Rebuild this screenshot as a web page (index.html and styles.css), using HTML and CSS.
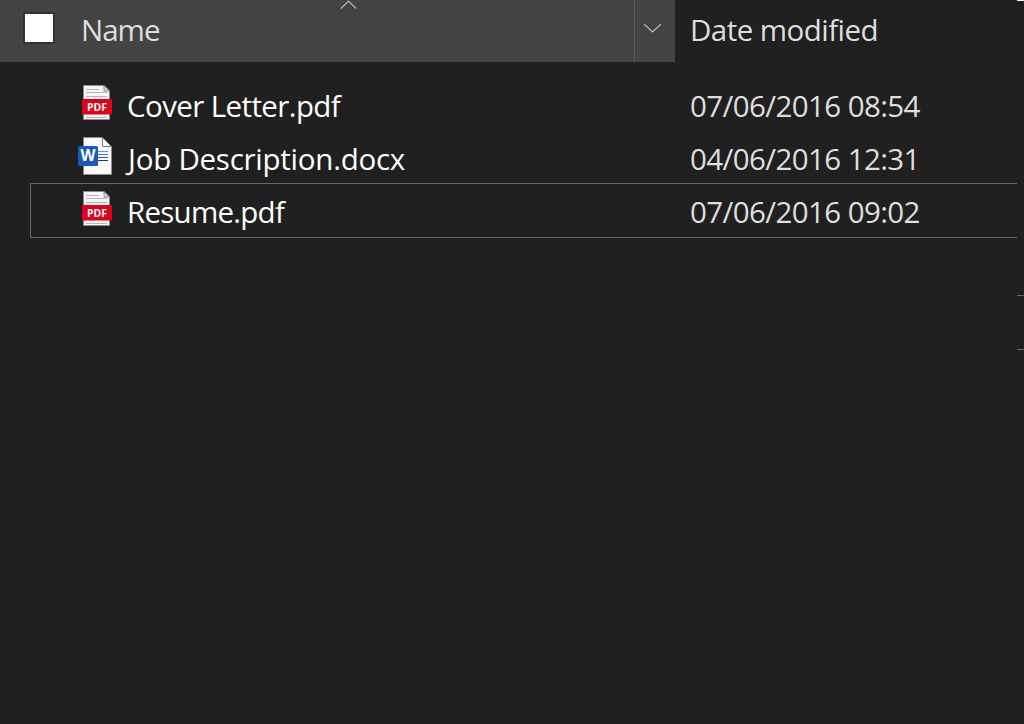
FILE: index.html
```html
<!DOCTYPE html>
<html lang="en">
<head>
<meta charset="utf-8">
<title>Files</title>
<link rel="stylesheet" href="styles.css">
</head>
<body>
<main class="explorer">
  <header class="columns">
    <div class="name-column">
      <span class="checkbox"></span>
      <span class="label name-label">Name</span>
      <svg class="sort" width="17" height="9"><path d="M1 8.500L8.500 1L16 8.500"/></svg>
    </div>
    <div class="filter"><svg width="19" height="10"><path d="M1 1L9.500 9L18 1"/></svg></div>
    <div class="label date-label">Date modified</div>
  </header>
  <section class="files">
    <div class="row">
      <svg class="icon" viewBox="0 0 36 40">
        <path d="M6.500 2.500H27L32.500 8V36.500H6.500Z" fill="#f5f5f5" stroke="#8b8b8b"/>
        <path d="M27 2.500V8H32.500Z" fill="#ddd" stroke="#777" stroke-width=".8"/>
        <path d="M9 6.500H22M9 9.500H30M9 13.500H30M9 34.500H30" stroke="#b5b5b5"/>
        <rect x="5" y="16" width="30" height="15.500" rx=".8" fill="#e2001a"/>
        <text class="pdf-label" x="10" y="27.500" textLength="20" lengthAdjust="spacingAndGlyphs">PDF</text>
      </svg>
      <span class="file cover">Cover Letter.pdf</span><time>07/06/2016 08:54</time>
    </div>
    <div class="row">
      <svg class="icon" viewBox="0 0 36 40">
        <path d="M6.500 1.500H25.500L34.500 10.500V38.500H6.500Z" fill="#fafafa" stroke="#8b8b8b"/>
        <path d="M25.500 1.500V10.500H34.500Z" fill="#fff" stroke="#777"/>
        <path d="M21 15.500H31" stroke="#41a5ee"/>
        <path d="M21 18.500H31" stroke="#2b7cd3"/>
        <path d="M21 21.500H31" stroke="#185abd"/>
        <path d="M21 24.500H31" stroke="#103f91"/>
        <rect x="1" y="10" width="20" height="20" rx="1.500" fill="#185abd"/>
        <text class="word-label" x="3.500" y="25" textLength="15" lengthAdjust="spacingAndGlyphs">W</text>
      </svg>
      <span class="file job">Job Description.docx</span><time>04/06/2016 12:31</time>
    </div>
    <div class="row focused">
      <svg class="icon" viewBox="0 0 36 40">
        <path d="M6.500 2.500H27L32.500 8V36.500H6.500Z" fill="#f5f5f5" stroke="#8b8b8b"/>
        <path d="M27 2.500V8H32.500Z" fill="#ddd" stroke="#777" stroke-width=".8"/>
        <path d="M9 6.500H22M9 9.500H30M9 13.500H30M9 34.500H30" stroke="#b5b5b5"/>
        <rect x="5" y="16" width="30" height="15.500" rx=".8" fill="#e2001a"/>
        <text class="pdf-label" x="10" y="27.500" textLength="20" lengthAdjust="spacingAndGlyphs">PDF</text>
      </svg>
      <span class="file resume">Resume.pdf</span><time>07/06/2016 09:02</time>
    </div>
  </section>
  <i class="corner"></i>
  <i class="edge"></i>
</main>
</body>
</html>
```
FILE: styles.css
```css
* { box-sizing: border-box; }
body { margin: 0; background: #202020; }
.explorer {
  position: relative;
  width: 1024px;
  height: 724px;
  overflow: hidden;
  background: #202020;
  color: #dedede;
  font: 29.5px/40px "Open Sans", "Noto Sans", sans-serif;
  white-space: nowrap;
}
.columns { display: flex; height: 62px; }
.name-column {
  position: relative;
  display: flex;
  width: 634px;
  padding: 10px 0 0 23px;
  background: #434343;
}
.checkbox { width: 32px; height: 32px; margin: 2px 26px 0 0; border: 2px solid #333; background: #fff; }
.sort { position: absolute; left: 340px; top: 0; }
.columns path { fill: none; stroke: #b8b8b8; stroke-width: 1.2; }
.filter { width: 41px; padding: 23px 0 0 8px; border-left: 1px solid #5c5c5c; background: #434343; }
.filter svg { display: block; }
.date-label { padding: 10px 0 0 15px; letter-spacing: -.55px; }
.name-label { letter-spacing: -1px; }
.files { padding: 16px 7px 0 30px; }
.row { display: flex; height: 53px; padding: 4px 0 0 1px; border: 1px solid transparent; }
.row.focused { height: 55px; padding-top: 5px; border-color: #666; border-right: 0; margin-top: -1px; }
.icon { flex: none; width: 36px; height: 40px; margin-left: 45px; }
.file { flex: none; width: 577px; padding: 3px 0 0 14px; color: #fff; }
time { padding-top: 3px; letter-spacing: -.6px; }
.cover { letter-spacing: -.6px; }
.job { padding-left: 15px; letter-spacing: -.25px; }
.resume { letter-spacing: -.75px; }
.pdf-label { fill: #fff; font: bold 11px "Open Sans", sans-serif; }
.word-label { fill: #fff; font: bold 16px "Open Sans", sans-serif; }
.corner { position: absolute; right: 0; top: 0; width: 7px; height: 1px; background: #fff; }
.edge { position: absolute; right: 0; top: 295px; width: 7px; height: 55px; border: solid #666; border-width: 1px 0; }
```
